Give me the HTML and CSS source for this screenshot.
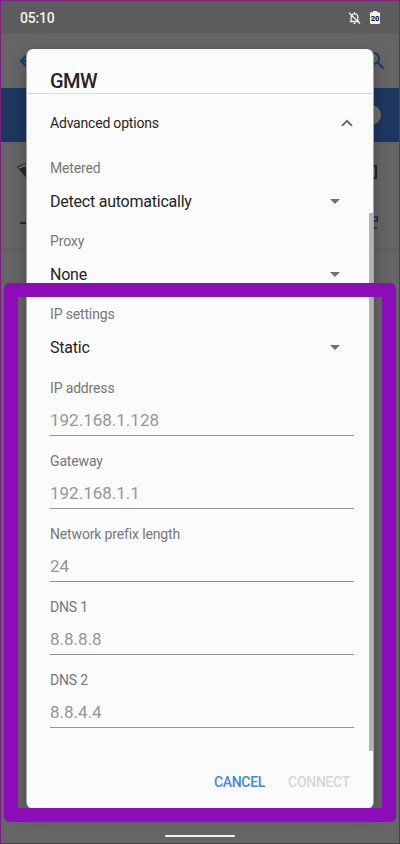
FILE: index.html
```html
<!DOCTYPE html>
<html lang="en">
<head>
<meta charset="utf-8">
<title>GMW</title>
<link rel="stylesheet" href="styles.css">
</head>
<body>
<div class="screen">
  <header class="status">
    <span>05:10</span>
    <span class="status-icons">
      <svg width="13" height="14" viewBox="0 0 13 14" fill="none" stroke="#eee" stroke-width="1.3"><path d="M3.1 10V6C3.1 3.8 4.3 2.8 6.5 2.8S9.8 4 9.8 6v4M1.8 10.5h9.5M6.5 1v2M5.5 12.4h2M1 1.8l11 11"/></svg>
      <svg width="10" height="13" viewBox="0 0 10 13"><path d="M3 0h4v1.3h2q1 0 1 1V12q0 1-1 1H1q-1 0-1-1V2.3q0-1 1-1h2z" fill="#f4f4f4"/><text x="5" y="9.6" text-anchor="middle" class="battery">20</text></svg>
    </span>
  </header>
  <div class="appbar">
    <svg width="18" height="18" viewBox="0 0 18 18" fill="none" stroke="#1d3d70" stroke-width="2.4"><path d="M8 3L2 9l6 6M2 9h15"/></svg>
    <svg width="19" height="19" viewBox="0 0 19 19" fill="none" stroke="#1d3862" stroke-width="2"><circle cx="7.5" cy="7.5" r="5.5"/><path d="M11.5 11.5l6 6"/></svg>
  </div>
  <div class="wifi-switch"><span class="knob"></span></div>
  <div class="network">
    <svg width="26" height="20" viewBox="0 0 26 20"><path d="M1 5Q13-3 25 5L13 19z" fill="#292929"/><path d="M3 6Q12 0 23 6" fill="none" stroke="#707070" stroke-width="2"/></svg>
    <svg width="10" height="14" viewBox="0 0 10 14"><path d="M1 1h8v12H1z" fill="none" stroke="#252525" stroke-width="2"/></svg>
  </div>
  <div class="add">
    <svg width="14" height="14" viewBox="0 0 14 14" stroke="#292929" stroke-width="2"><path d="M0 7h14M7 0v14"/></svg>
    <svg width="14" height="16" viewBox="0 0 14 16" fill="none" stroke="#1d3862" stroke-width="2"><path d="M9 2h4v4H9zM1 2h5v4H1zM1 10h5v4H1zM9 13h4"/></svg>
  </div>
  <span class="home"></span>

  <main class="dialog">
    <h1>GMW</h1>
    <div class="advanced">Advanced options
      <svg width="12" height="8" viewBox="0 0 12 8" fill="none" stroke="#666" stroke-width="1.8"><path d="M1 6.9L6 1.8l5 5.1"/></svg>
    </div>
    <div class="field"><label>Metered</label><div class="select">Detect automatically<i></i></div></div>
    <div class="field"><label>Proxy</label><div class="select">None<i></i></div></div>
    <div class="field"><label>IP settings</label><div class="select">Static<i></i></div></div>
    <div class="field"><label>IP address</label><div class="input">192.168.1.128</div></div>
    <div class="field"><label>Gateway</label><div class="input">192.168.1.1</div></div>
    <div class="field"><label>Network prefix length</label><div class="input">24</div></div>
    <div class="field"><label>DNS 1</label><div class="input">8.8.8.8</div></div>
    <div class="field"><label>DNS 2</label><div class="input">8.8.4.4</div></div>
    <div class="actions"><span class="cancel">CANCEL</span><span class="connect">CONNECT</span></div>
    <span class="scrollbar"></span>
  </main>
  <div class="highlight"></div>
</div>
</body>
</html>
```
FILE: styles.css
```css
* { box-sizing: border-box; }
body { margin: 0; font-family: Roboto, sans-serif; }
.screen {
  position: relative;
  width: 400px;
  height: 844px;
  overflow: hidden;
  background: #656565;
}
.screen::after {
  content: "";
  position: absolute;
  inset: 0;
  border: 1px solid #7a2080;
}
.status {
  height: 33px;
  padding: 2px 20px 0 20px;
  display: flex;
  align-items: center;
  justify-content: space-between;
  background: #5c5c5c;
  color: #f2f2f2;
  font-size: 14px;
  letter-spacing: -.2px;
  font-weight: 500;
}
.status-icons { display: flex; align-items: center; gap: 9px; }
.battery { font: 900 7.5px Roboto, sans-serif; letter-spacing: 0; fill: #222; }
.appbar {
  height: 55px;
  padding: 0 15px 0 19px;
  display: flex;
  align-items: center;
  justify-content: space-between;
}
.wifi-switch {
  height: 54px;
  padding-right: 19px;
  display: flex;
  align-items: center;
  justify-content: flex-end;
  background: #1d3760;
}
.knob { width: 20px; height: 20px; border-radius: 50%; background: #707070; }
.network {
  height: 60px;
  padding: 0 23px 0 16px;
  display: flex;
  align-items: center;
  justify-content: space-between;
}
.add {
  height: 48px;
  padding: 0 22px 6px 20px;
  display: flex;
  align-items: center;
  justify-content: space-between;
  border-bottom: 1px solid #595959;
}
.home {
  position: absolute;
  left: 165px;
  top: 835px;
  width: 70px;
  height: 2px;
  border-radius: 1px;
  background: #f2f2f2;
}
.dialog {
  position: absolute;
  left: 26px;
  top: 49px;
  width: 348px;
  height: 760px;
  border: solid #a5a5a5;
  border-width: 0 .5px;
  border-radius: 7px;
  background: #fbfbfb;
  box-shadow: 0 6px 16px rgba(0, 0, 0, .28);
  color: #252525;
}
h1 {
  height: 45px;
  margin: 0;
  padding: 19px 24px 0 23px;
  border-bottom: 1px solid #dcdcdc;
  font-size: 20px;
  letter-spacing: -.6px;
  line-height: 26px;
  font-weight: 500;
}
.advanced {
  height: 64px;
  padding: 0 20px 6px 23px;
  display: flex;
  align-items: center;
  justify-content: space-between;
  font-size: 14px;
  letter-spacing: -.2px;
}
.field { height: 73.2px; padding: 0 19px 0 23px; }
label {
  display: block;
  height: 31px;
  font-size: 14px;
  letter-spacing: -.15px;
  line-height: 20px;
  color: #777;
}
.select {
  height: 24px;
  padding-right: 14px;
  display: flex;
  align-items: center;
  justify-content: space-between;
  font-size: 16px;
  letter-spacing: -.23px;
}
.select i {
  border: solid transparent;
  border-width: 5px 5px 0;
  border-top-color: #707070;
}
.input {
  height: 27px;
  border-bottom: 1.5px solid #929292;
  font-size: 17px;
  line-height: 23px;
  color: #969696;
}
.actions {
  padding: 28px 23px 0 0;
  display: flex;
  justify-content: flex-end;
  gap: 23px;
  font-size: 14px;
  letter-spacing: -.3px;
  line-height: 20px;
  font-weight: 500;
}
.cancel { color: #4285e8; }
.connect { color: #d5d7d6; }
.scrollbar {
  position: absolute;
  right: 0;
  top: 164px;
  width: 4px;
  height: 538px;
  background: #b2b4b3;
}
.highlight {
  position: absolute;
  left: 4px;
  top: 283px;
  width: 392px;
  height: 539px;
  border: 14px solid #8d0cba;
  border-radius: 6px;
}
```
